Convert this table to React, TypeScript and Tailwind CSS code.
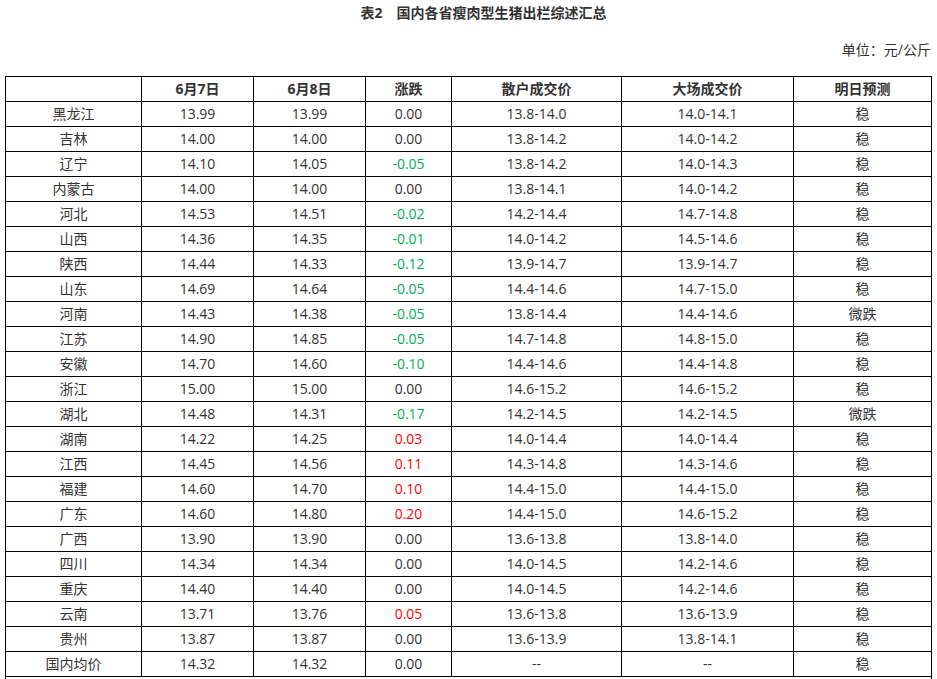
import React from "react";

type Row = [string, string, string, string, string, string, string];

const rows: Row[] = [
  ["黑龙江", "13.99", "13.99", "0.00", "13.8-14.0", "14.0-14.1", "稳"],
  ["吉林", "14.00", "14.00", "0.00", "13.8-14.2", "14.0-14.2", "稳"],
  ["辽宁", "14.10", "14.05", "-0.05", "13.8-14.2", "14.0-14.3", "稳"],
  ["内蒙古", "14.00", "14.00", "0.00", "13.8-14.1", "14.0-14.2", "稳"],
  ["河北", "14.53", "14.51", "-0.02", "14.2-14.4", "14.7-14.8", "稳"],
  ["山西", "14.36", "14.35", "-0.01", "14.0-14.2", "14.5-14.6", "稳"],
  ["陕西", "14.44", "14.33", "-0.12", "13.9-14.7", "13.9-14.7", "稳"],
  ["山东", "14.69", "14.64", "-0.05", "14.4-14.6", "14.7-15.0", "稳"],
  ["河南", "14.43", "14.38", "-0.05", "13.8-14.4", "14.4-14.6", "微跌"],
  ["江苏", "14.90", "14.85", "-0.05", "14.7-14.8", "14.8-15.0", "稳"],
  ["安徽", "14.70", "14.60", "-0.10", "14.4-14.6", "14.4-14.8", "稳"],
  ["浙江", "15.00", "15.00", "0.00", "14.6-15.2", "14.6-15.2", "稳"],
  ["湖北", "14.48", "14.31", "-0.17", "14.2-14.5", "14.2-14.5", "微跌"],
  ["湖南", "14.22", "14.25", "0.03", "14.0-14.4", "14.0-14.4", "稳"],
  ["江西", "14.45", "14.56", "0.11", "14.3-14.8", "14.3-14.6", "稳"],
  ["福建", "14.60", "14.70", "0.10", "14.4-15.0", "14.4-15.0", "稳"],
  ["广东", "14.60", "14.80", "0.20", "14.4-15.0", "14.6-15.2", "稳"],
  ["广西", "13.90", "13.90", "0.00", "13.6-13.8", "13.8-14.0", "稳"],
  ["四川", "14.34", "14.34", "0.00", "14.0-14.5", "14.2-14.6", "稳"],
  ["重庆", "14.40", "14.40", "0.00", "14.0-14.5", "14.2-14.6", "稳"],
  ["云南", "13.71", "13.76", "0.05", "13.6-13.8", "13.6-13.9", "稳"],
  ["贵州", "13.87", "13.87", "0.00", "13.6-13.9", "13.8-14.1", "稳"],
  ["国内均价", "14.32", "14.32", "0.00", "--", "--", "稳"],
];

const headers = ["", "6月7日", "6月8日", "涨跌", "散户成交价", "大场成交价", "明日预测"];
const widths = ["w-[136px]", "w-[112px]", "w-[112px]", "w-[86px]", "w-[170px]", "w-[172px]", "w-[138px]"];

function changeColor(v: string) {
  const n = parseFloat(v);
  if (n < 0) return "text-[#00b050]";
  if (n > 0) return "text-[#ff0000]";
  return "";
}

export default function App() {
  return (
    <div
      className="w-[937px] bg-white text-[14px] text-[#333]"
      style={{ fontFamily: '"Open Sans", "Noto Sans CJK SC", sans-serif' }}
    >
      <div className="pt-[3px] pl-[30px] text-center font-bold leading-[20px]">
        表2　国内各省瘦肉型生猪出栏综述汇总
      </div>
      <div className="mt-[17px] pr-[6px] text-right leading-[20px]">单位：元/公斤</div>
      <div className="mt-[16px] pl-[5px]">
        <table className="table-fixed border-collapse">
          <colgroup>
            {widths.map((w, i) => (
              <col key={i} className={w} />
            ))}
          </colgroup>
          <thead>
            <tr>
              {headers.map((h, i) => (
                <th key={i} className="h-[25px] border border-black p-0 text-center font-bold leading-[24px]">
                  {h}
                </th>
              ))}
            </tr>
          </thead>
          <tbody>
            {rows.map((r) => (
              <tr key={r[0]}>
                {r.map((c, i) => (
                  <td
                    key={i}
                    className={`h-[25px] border border-black p-0 text-center leading-[24px] ${i === 3 ? changeColor(c) : ""}`}
                  >
                    {c}
                  </td>
                ))}
              </tr>
            ))}
            <tr>
              <td colSpan={7} className="h-[25px] border border-black p-0" />
            </tr>
          </tbody>
        </table>
      </div>
    </div>
  );
}
